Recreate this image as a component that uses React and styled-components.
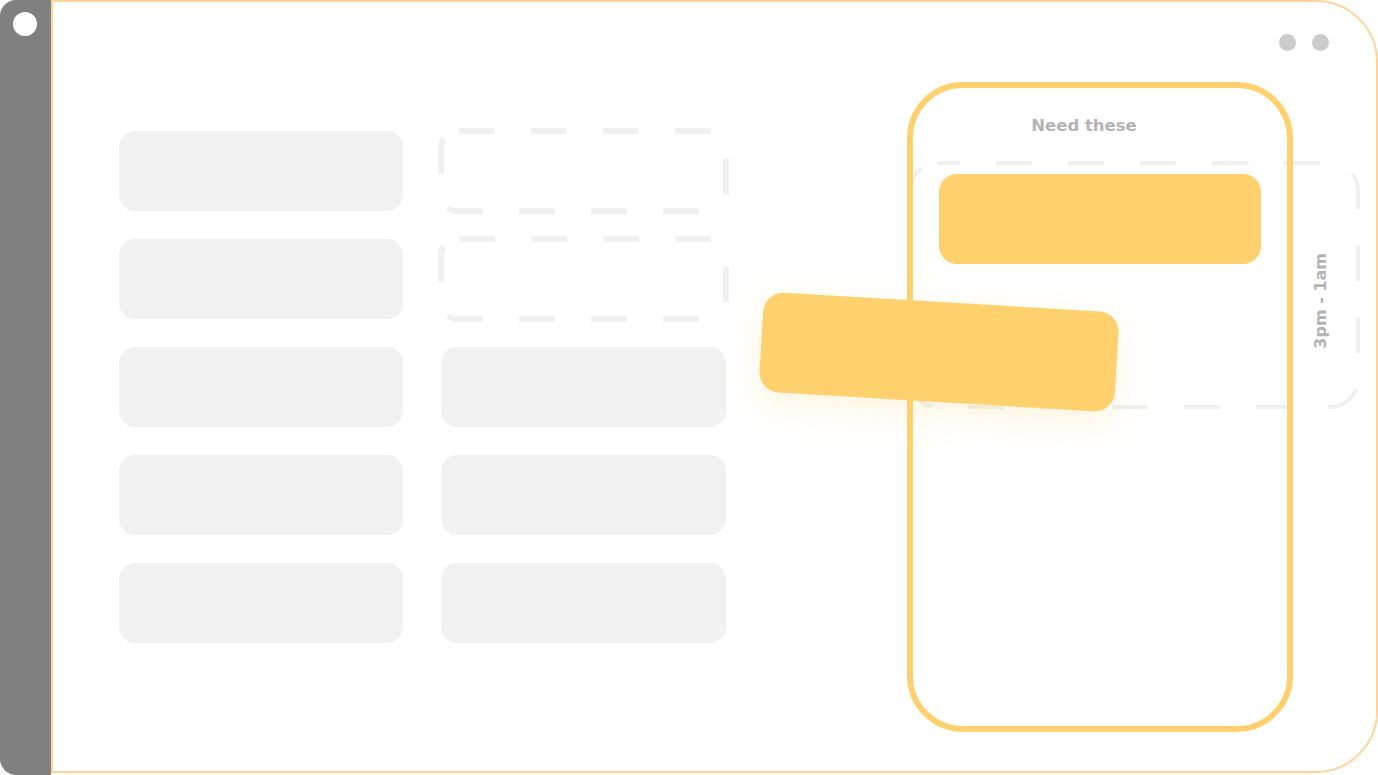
import React from "react";
import styled, { createGlobalStyle } from "styled-components";

const GlobalStyle = createGlobalStyle`
  html, body { margin: 0; padding: 0; background: #ffffff; }
  body { font-family: "DejaVu Sans", "Open Sans", sans-serif; }
`;

const Frame = styled.div`
  display: flex;
  width: 1378px;
  height: 775px;
  overflow: hidden;
`;

const Sidebar = styled.aside`
  flex: 0 0 51px;
  height: 775px;
  box-sizing: border-box;
  padding: 12px 0 0 13px;
  background: #808080;
  border-radius: 16px 0 0 16px;
`;

const Knob = styled.div`
  width: 24px;
  height: 24px;
  border-radius: 50%;
  background: #ffffff;
`;

const Main = styled.main`
  flex: 1;
  height: 773px;
  box-sizing: border-box;
  display: flex;
  flex-direction: column;
  border: 2px solid #ffd49b;
  border-radius: 0 62px 62px 0;
  background: #ffffff;
`;

const Header = styled.header`
  display: flex;
  justify-content: flex-end;
  gap: 16px;
  padding: 32px 47px 0 0;
`;

const Dot = styled.span`
  width: 17px;
  height: 17px;
  border-radius: 50%;
  background: #cbcbcb;
`;

const Body = styled.section`
  display: flex;
  align-items: flex-start;
  padding-left: 66px;
`;

const Grid = styled.div`
  margin-top: 80px;
  display: grid;
  grid-template-columns: 284px 285px;
  grid-auto-rows: 80px;
  column-gap: 38px;
  row-gap: 28px;
`;

const Slot = styled.div`
  background: #f1f1f1;
  border-radius: 16px;
`;

const DashedSlotBox = styled.div`
  position: relative;
`;

const DashSvg = styled.svg`
  display: block;
  overflow: visible;
`;

const DashedSlot = () => (
  <DashedSlotBox>
    <DashSvg width="285" height="80">
      <rect
        x="0"
        y="0"
        width="285"
        height="80"
        rx="16"
        fill="none"
        stroke="#f0f0f0"
        strokeWidth="6"
        strokeDasharray="36 36"
        strokeDashoffset="-2"
      />
    </DashSvg>
  </DashedSlotBox>
);

const PhoneArea = styled.div`
  position: relative;
  flex: 0 0 386px;
  height: 650px;
  margin-top: 31px;
  margin-left: 181px;
`;

const DropZone = styled.div`
  position: absolute;
  left: 3px;
  top: 81px;
  width: 448px;
  height: 244px;
  z-index: 0;
  display: flex;
  justify-content: flex-end;
  align-items: center;
  box-sizing: border-box;
  padding: 32px 28px 0 0;
  svg {
    position: absolute;
    left: 0;
    top: 0;
  }
`;

const RangeLabel = styled.span`
  position: relative;
  writing-mode: vertical-rl;
  transform: rotate(180deg);
  font-family: "DejaVu Sans", "Open Sans", sans-serif;
  font-weight: 700;
  font-size: 16px;
  color: #b3b3b3;
  white-space: nowrap;
`;

const Phone = styled.div`
  position: relative;
  z-index: 1;
  box-sizing: border-box;
  width: 386px;
  height: 650px;
  border: 6px solid #ffd16e;
  border-radius: 56px;
  padding: 27px 26px 0;
  display: flex;
  flex-direction: column;
`;

const Title = styled.h2`
  margin: 0 32px 0 0;
  text-align: center;
  font-family: "DejaVu Sans", "Open Sans", sans-serif;
  font-weight: 700;
  font-size: 16.5px;
  line-height: 21px;
  color: #b3b3b3;
`;

const ShiftCard = styled.div`
  margin-top: 38px;
  height: 90px;
  border-radius: 18px;
  background: #ffd16e;
`;

const DraggedCard = styled.div`
  position: absolute;
  z-index: 2;
  left: -146px;
  top: 220px;
  width: 356px;
  height: 100px;
  border-radius: 20px;
  background: #ffd16e;
  transform: rotate(3.4deg);
  box-shadow: 0 12px 34px rgba(255, 209, 110, 0.22);
`;

export default function App() {
  return (
    <>
      <GlobalStyle />
      <Frame>
        <Sidebar>
          <Knob />
        </Sidebar>
        <Main>
          <Header>
            <Dot />
            <Dot />
          </Header>
          <Body>
            <Grid>
              <Slot />
              <DashedSlot />
              <Slot />
              <DashedSlot />
              <Slot />
              <Slot />
              <Slot />
              <Slot />
              <Slot />
              <Slot />
            </Grid>
            <PhoneArea>
              <DropZone>
                <svg width="448" height="244" overflow="visible">
                  <rect
                    x="0"
                    y="0"
                    width="448"
                    height="244"
                    rx="28"
                    fill="none"
                    stroke="#efefef"
                    strokeWidth="4"
                    strokeDasharray="36 36"
                    strokeDashoffset="14"
                  />
                </svg>
                <RangeLabel>3pm - 1am</RangeLabel>
              </DropZone>
              <Phone>
                <Title>Need these</Title>
                <ShiftCard />
              </Phone>
              <DraggedCard />
            </PhoneArea>
          </Body>
        </Main>
      </Frame>
    </>
  );
}
